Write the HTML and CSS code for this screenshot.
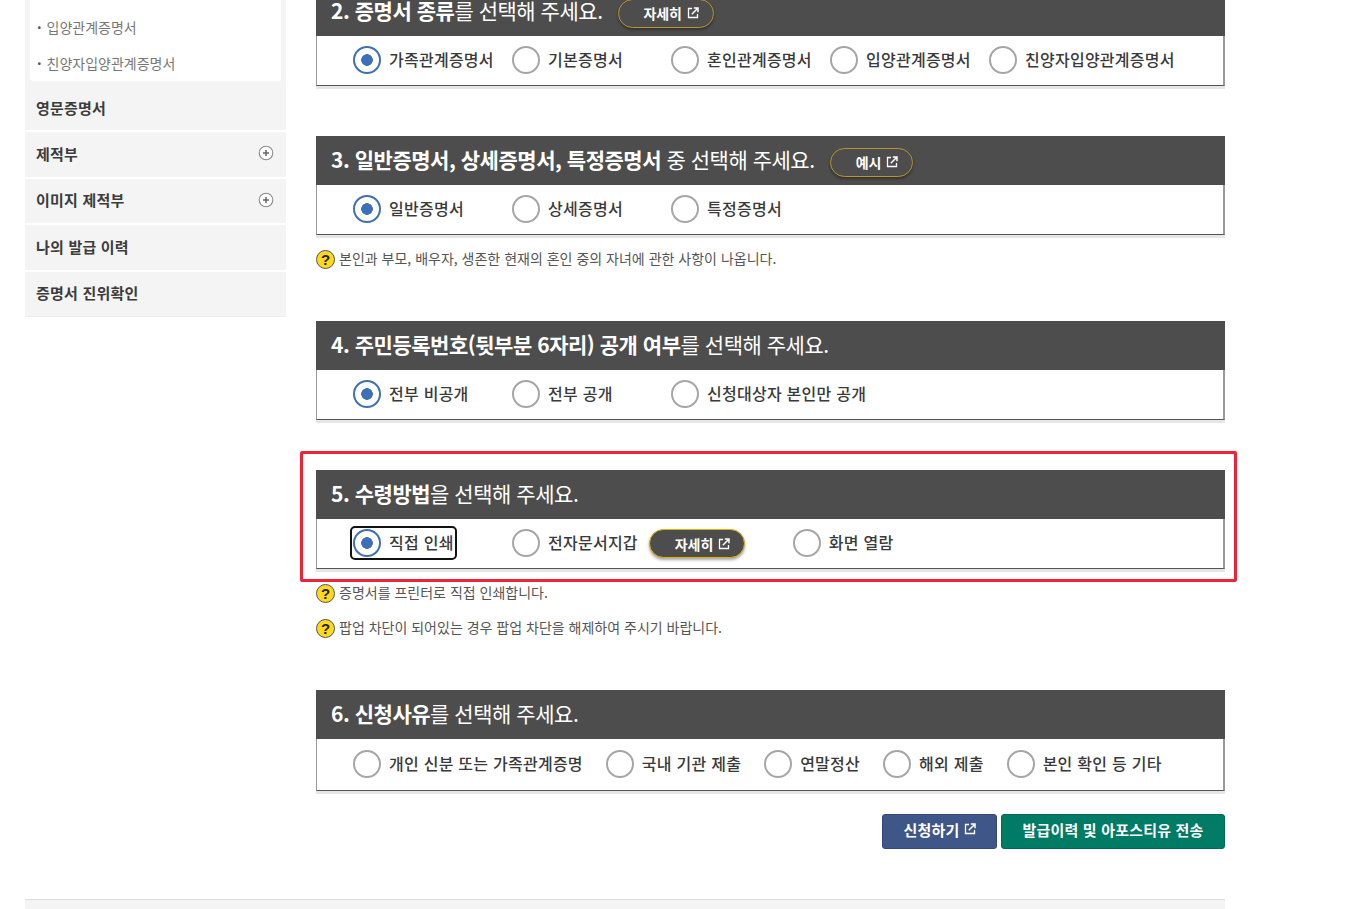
FILE: index.html
```html
<!DOCTYPE html>
<html lang="ko">
<head>
<meta charset="utf-8">
<title>증명서 발급</title>
<link rel="stylesheet" href="styles.css">
</head>
<body>
<svg class="defs" width="0" height="0" aria-hidden="true">
  <symbol id="ext" viewBox="0 0 12 12"><path d="M5 1.5H1.5v9h9V7" fill="none" stroke="currentColor" stroke-width="1.3"/><path d="M4.8 7.2 10 2M6.8 1h4.2v4.2" fill="none" stroke="currentColor" stroke-width="1.5"/></symbol>
  <symbol id="plus" viewBox="0 0 16 16"><circle cx="8" cy="8" r="6.8" fill="#fff" stroke="#8a8a8a" stroke-width="1.1"/><path d="M5 8h6M8 5v6" stroke="#666" stroke-width="1.5"/></symbol>
</svg>
<div class="page">
  <div class="shell">
    <aside class="side">
      <ul class="sub">
        <li>입양관계증명서</li>
        <li>친양자입양관계증명서</li>
      </ul>
      <ul class="menu">
        <li class="menu-a">영문증명서</li>
        <li>제적부<svg class="plus"><use href="#plus"/></svg></li>
        <li>이미지 제적부<svg class="plus"><use href="#plus"/></svg></li>
        <li>나의 발급 이력</li>
        <li>증명서 진위확인</li>
      </ul>
    </aside>
    <main class="main">
      <section class="block">
        <h2 class="head"><span class="num">2. 증명서 종류</span>를 선택해 주세요.<a class="pill">자세히<svg class="ext"><use href="#ext"/></svg></a></h2>
        <ul class="opts">
          <li class="opt on"><i class="radio"></i>가족관계증명서</li>
          <li class="opt"><i class="radio"></i>기본증명서</li>
          <li class="opt"><i class="radio"></i>혼인관계증명서</li>
          <li class="opt"><i class="radio"></i>입양관계증명서</li>
          <li class="opt"><i class="radio"></i>친양자입양관계증명서</li>
        </ul>
      </section>
      <section class="block">
        <h2 class="head"><span class="num">3. 일반증명서, 상세증명서, 특정증명서</span> 중 선택해 주세요.<a class="pill pill-short">예시<svg class="ext"><use href="#ext"/></svg></a></h2>
        <ul class="opts">
          <li class="opt on"><i class="radio"></i>일반증명서</li>
          <li class="opt"><i class="radio"></i>상세증명서</li>
          <li class="opt"><i class="radio"></i>특정증명서</li>
        </ul>
        <ul class="notes">
          <li class="note"><i class="q">?</i>본인과 부모, 배우자, 생존한 현재의 혼인 중의 자녀에 관한 사항이 나옵니다.</li>
        </ul>
      </section>
      <section class="block">
        <h2 class="head"><span class="num">4. 주민등록번호(뒷부분 6자리) 공개 여부</span>를 선택해 주세요.</h2>
        <ul class="opts">
          <li class="opt on"><i class="radio"></i>전부 비공개</li>
          <li class="opt"><i class="radio"></i>전부 공개</li>
          <li class="opt"><i class="radio"></i>신청대상자 본인만 공개</li>
        </ul>
      </section>
      <section class="block">
        <h2 class="head"><span class="num">5. 수령방법</span>을 선택해 주세요.</h2>
        <ul class="opts">
          <li class="opt on"><span class="focus"><i class="radio"></i>직접 인쇄</span></li>
          <li class="opt"><i class="radio"></i>전자문서지갑<a class="pill pill-solid">자세히<svg class="ext"><use href="#ext"/></svg></a></li>
          <li class="opt"><i class="radio"></i>화면 열람</li>
        </ul>
        <ul class="notes">
          <li class="note"><i class="q">?</i>증명서를 프린터로 직접 인쇄합니다.</li>
          <li class="note"><i class="q">?</i>팝업 차단이 되어있는 경우 팝업 차단을 해제하여 주시기 바랍니다.</li>
        </ul>
        <div class="mark"></div>
      </section>
      <section class="block block-last">
        <h2 class="head"><span class="num">6. 신청사유</span>를 선택해 주세요.</h2>
        <ul class="opts opts-wide">
          <li class="opt"><i class="radio"></i>개인 신분 또는 가족관계증명</li>
          <li class="opt"><i class="radio"></i>국내 기관 제출</li>
          <li class="opt"><i class="radio"></i>연말정산</li>
          <li class="opt"><i class="radio"></i>해외 제출</li>
          <li class="opt"><i class="radio"></i>본인 확인 등 기타</li>
        </ul>
      </section>
      <div class="actions">
        <a class="btn btn-blue">신청하기<svg class="ext"><use href="#ext"/></svg></a>
        <a class="btn btn-green">발급이력 및 아포스티유 전송</a>
      </div>
    </main>
  </div>
  <footer class="foot"></footer>
</div>
</body>
</html>
```

FILE: styles.css
```css
* { box-sizing: border-box; }
html, body { margin: 0; height: 100%; overflow: hidden; background: #fff; }
body { font-family: "Noto Sans CJK KR", "Noto Sans", sans-serif; color: #333; }
ul { list-style: none; margin: 0; padding: 0; }
h2 { margin: 0; }
.defs { position: absolute; }

.page { width: 1225px; margin-top: -13px; padding-left: 25px; }
.shell { display: flex; gap: 30px; align-items: flex-start; }

/* sidebar */
.side { width: 261px; flex: none; background: #f4f4f4; border-bottom: 1px solid #eee; }
.sub { background: #fff; margin: 0 5px; height: 94px; padding-top: 23px; border-radius: 0 0 3px 3px; }
.sub li { height: 35.5px; line-height: 35px; padding-left: 7px; font-size: 14px; color: #777; }
.sub li::before { content: "·"; font-weight: 700; color: #555; margin-right: 5px; }
.menu li { display: flex; align-items: center; justify-content: space-between; height: 44.5px; margin-top: 2px; padding: 0 12px 2px 11px; font-size: 15px; font-weight: 700; color: #3c3c3c; letter-spacing: .2px; background: #f4f4f4; box-shadow: 0 -2px 0 #fff; }
.menu .menu-a { height: 49px; margin-top: 0; box-shadow: none; padding-top: 5px; }
.plus { width: 16px; height: 16px; }

/* blocks */
.main { width: 909px; flex: none; }
.block { position: relative; margin-bottom: 50px; }
.block-last { margin-bottom: 23px; }
.head { display: flex; align-items: center; height: 49px; padding: 0 15px 3px; background: #4d4d4d; color: #fff; font-size: 21px; font-weight: 400; letter-spacing: -.47px; white-space: pre-wrap; }
.num { font-weight: 700; }
.opts { display: flex; align-items: center; height: 50px; padding: 0 0 2px 36px; gap: 18px; background: #fff; border: solid #999; border-width: 0 2px 1px 1px; border-bottom-color: #555; box-shadow: 0 3px 0 #e6e6e6; }
.opts-wide { height: 52px; gap: 23px; }
.opt { display: flex; align-items: center; min-width: 141px; padding-bottom: 2px; font-size: 16px; font-weight: 500; color: #3a3a3a; letter-spacing: .25px; white-space: nowrap; }
.opts-wide .opt { min-width: 0; }
.radio { width: 28px; height: 28px; margin: 2px 8px 0 0; flex: none; border: 2.5px solid #a6a6a6; border-radius: 50%; background: #fff; }
.on .radio { border-color: #3d70b8; background: radial-gradient(circle, #3d70b8 0 5.5px, #fff 6.1px); }
.focus { display: flex; align-items: center; width: 101px; height: 28px; margin-top: 2px; padding-bottom: 2px; outline: 2px solid #111; outline-offset: 1px; border-radius: 2px; }
.focus .radio { margin-top: 2px; }

/* pills */
.pill { display: inline-flex; align-items: center; height: 29px; width: 96px; margin: 6px 0 0 15px; padding-left: 25px; border: 1.5px solid #b8962a; border-radius: 15px; background: #4d4d4d; color: #fff; font-size: 14px; font-weight: 700; letter-spacing: -.1px; box-shadow: 0 2px 3px rgba(0,0,0,.35); white-space: nowrap; }
.pill-short { width: 83px; }
.pill-solid { margin: 4px 30px 0 11px; border-color: #e2b400; }
.ext { width: 12px; height: 12px; margin-left: 5px; flex: none; }

/* notes */
.notes { display: flex; flex-direction: column; gap: 15px; margin-top: 14px; padding-bottom: 2px; }
.note { display: flex; align-items: center; height: 20px; padding-bottom: 2px; font-size: 14px; color: #555; }
.q { display: flex; align-items: center; justify-content: center; width: 19px; height: 19px; margin: 2px 4px 0 0; border: 1.5px solid #555; border-radius: 50%; background: #ffd91c; color: #222; font-family: "Liberation Sans", sans-serif; font-size: 15px; font-weight: 700; font-style: normal; }

/* reference annotation */
.mark { position: absolute; left: -16px; top: -19px; width: 937px; height: 131px; border: 3px solid #ee2436; border-radius: 2px; pointer-events: none; }

/* actions */
.actions { display: flex; justify-content: flex-end; gap: 4px; }
.btn { display: flex; align-items: center; justify-content: center; height: 35px; padding-bottom: 5px; border-radius: 3px; color: #fff; font-size: 15px; font-weight: 700; letter-spacing: .2px; }
.btn-blue { width: 115px; background: #3f5688; border: 1px solid #34497a; }
.btn-green { width: 224px; background: #007b66; border: 1px solid #006a58; }
.btn .ext { margin-left: 4px; }

.foot { height: 40px; margin-top: 50px; background: #f4f4f4; border-top: 1px solid #ddd; }
```
